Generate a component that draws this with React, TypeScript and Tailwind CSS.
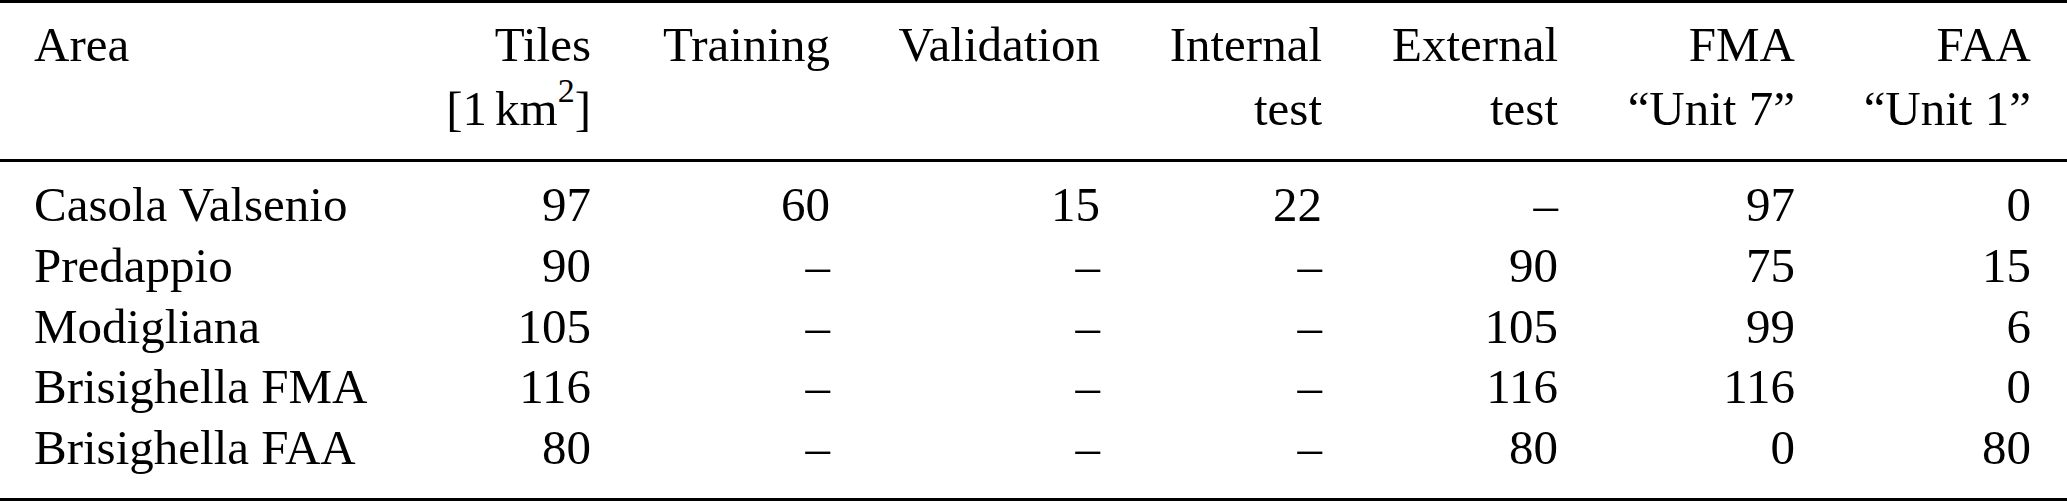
import React from "react";

const rows: string[][] = [
  ["Casola Valsenio", "97", "60", "15", "22", "–", "97", "0"],
  ["Predappio", "90", "–", "–", "–", "90", "75", "15"],
  ["Modigliana", "105", "–", "–", "–", "105", "99", "6"],
  ["Brisighella FMA", "116", "–", "–", "–", "116", "116", "0"],
  ["Brisighella FAA", "80", "–", "–", "–", "80", "0", "80"],
];

const gridCols =
  "grid grid-cols-[420px_171px_239px_270px_222px_236px_237px_236px]";

function HeadCell({
  first,
  second,
  left,
}: {
  first: React.ReactNode;
  second?: React.ReactNode;
  left?: boolean;
}) {
  return (
    <div className={left ? "pl-[34px] text-left" : "text-right"}>
      <div className="whitespace-nowrap">{first}</div>
      {second !== undefined && (
        <div className="mt-[3px] whitespace-nowrap">{second}</div>
      )}
    </div>
  );
}

export default function App() {
  return (
    <div className="w-[2067px] h-[502px] bg-white text-black font-['Liberation_Serif',serif] text-[49px] leading-[61px] overflow-hidden">
      <div className="h-[3px] bg-black" />
      <div className={`${gridCols} pt-[11px] pb-[20px]`}>
        <HeadCell first="Area" left />
        <HeadCell
          first="Tiles"
          second={
            <span>
              [1<span className="inline-block w-[8px]" />
              km
              <span className="relative -top-[23px] text-[34px] leading-none">
                2
              </span>
              ]
            </span>
          }
        />
        <HeadCell first="Training" />
        <HeadCell first="Validation" />
        <HeadCell first="Internal" second="test" />
        <HeadCell first="External" second="test" />
        <HeadCell first="FMA" second="“Unit 7”" />
        <HeadCell first="FAA" second="“Unit 1”" />
      </div>
      <div className="h-[3px] bg-black" />
      <div className={`${gridCols} pt-[13px] pb-[19px] leading-[60.8px]`}>
        {rows.map((r, i) =>
          r.map((c, j) => (
            <div
              key={`${i}-${j}`}
              className={
                j === 0
                  ? "pl-[34px] text-left whitespace-nowrap"
                  : "text-right whitespace-nowrap"
              }
            >
              {c}
            </div>
          ))
        )}
      </div>
      <div className="h-[3px] bg-black" />
    </div>
  );
}
